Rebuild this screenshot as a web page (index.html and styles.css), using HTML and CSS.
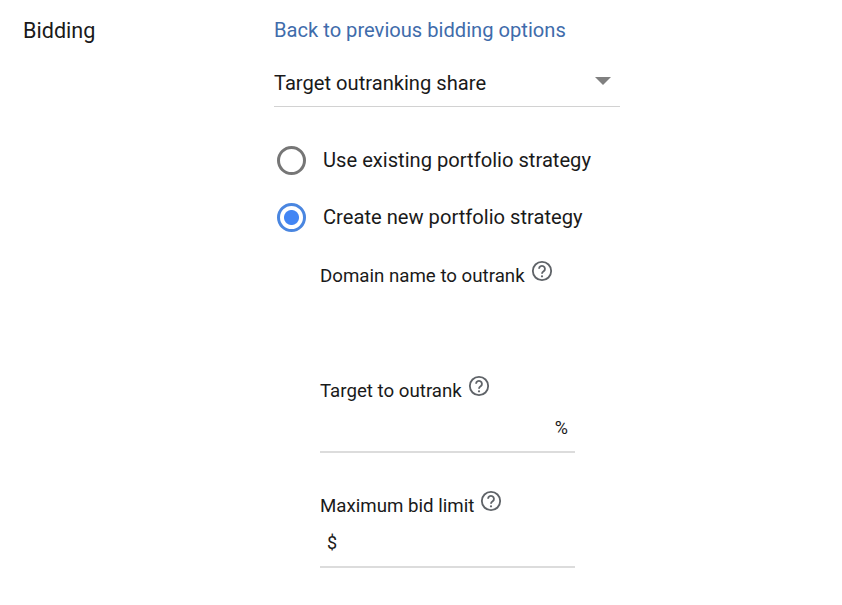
FILE: index.html
```html
<!DOCTYPE html>
<html>
<head>
  <title>Bidding</title>
  <link rel="stylesheet" href="styles.css">
</head>
<body>
  <div class="container">
    <div class="section-label">Bidding</div>
    <div class="section-body">
      <a class="back-link">Back to previous bidding options</a>
      <div class="select-box">
        <span>Target outranking share</span>
        <span class="select-arrow"></span>
      </div>
      <div class="radio-row first">
        <span class="radio"></span>
        <span>Use existing portfolio strategy</span>
      </div>
      <div class="radio-row second">
        <span class="radio checked"></span>
        <span>Create new portfolio strategy</span>
      </div>
      <div class="fields">
        <div class="field field-domain">
          <div class="field-label">
            <span>Domain name to outrank</span>
            <svg class="help" viewBox="0 0 24 24"><circle cx="12" cy="12" r="10" fill="none" stroke="#5f6368" stroke-width="2"/><path d="M8.8 9.6a3.2 3.2 0 1 1 5 2.7c-1.2.8-1.8 1.4-1.8 2.7" fill="none" stroke="#5f6368" stroke-width="2"/><circle cx="12" cy="17.8" r="1.2" fill="#5f6368"/></svg>
          </div>
        </div>
        <div class="field field-target">
          <div class="field-label">
            <span>Target to outrank</span>
            <svg class="help" viewBox="0 0 24 24"><circle cx="12" cy="12" r="10" fill="none" stroke="#5f6368" stroke-width="2"/><path d="M8.8 9.6a3.2 3.2 0 1 1 5 2.7c-1.2.8-1.8 1.4-1.8 2.7" fill="none" stroke="#5f6368" stroke-width="2"/><circle cx="12" cy="17.8" r="1.2" fill="#5f6368"/></svg>
          </div>
          <div class="input-line percent"><span>%</span></div>
        </div>
        <div class="field field-bid">
          <div class="field-label">
            <span>Maximum bid limit</span>
            <svg class="help" viewBox="0 0 24 24"><circle cx="12" cy="12" r="10" fill="none" stroke="#5f6368" stroke-width="2"/><path d="M8.8 9.6a3.2 3.2 0 1 1 5 2.7c-1.2.8-1.8 1.4-1.8 2.7" fill="none" stroke="#5f6368" stroke-width="2"/><circle cx="12" cy="17.8" r="1.2" fill="#5f6368"/></svg>
          </div>
          <div class="input-line dollar"><span>$</span></div>
        </div>
      </div>
    </div>
  </div>
</body>
</html>
```

FILE: styles.css
```css
body {
  margin: 0;
  background-color: #ffffff;
  color: #1a1a1a;
  font-family: Roboto, "Liberation Sans", sans-serif;
}
.container {
  display: flex;
  padding-top: 18px;
  padding-left: 23px;
}
.section-label {
  width: 251px;
  font-size: 21.6px;
  line-height: 26px;
}
.section-body {
  width: 346px;
}
.back-link {
  display: block;
  color: #3f6cab;
  font-size: 20.15px;
  line-height: 24px;
}
.select-box {
  display: flex;
  justify-content: space-between;
  height: 35px;
  margin-top: 29px;
  border-bottom: 1px solid #d2d2d2;
  font-size: 20.15px;
  line-height: 24px;
}
.select-arrow {
  width: 0;
  height: 0;
  margin: 6px 9px 0 0;
  border-left: 8px solid transparent;
  border-right: 8px solid transparent;
  border-top: 8px solid #808080;
}
.radio-row {
  display: flex;
  align-items: center;
  gap: 17px;
  padding-left: 3px;
  font-size: 20.15px;
  line-height: 30px;
}
.radio-row.first {
  margin-top: 38px;
}
.radio-row.second {
  margin-top: 27px;
}
.radio {
  box-sizing: border-box;
  width: 29px;
  height: 29px;
  border: 3px solid #767676;
  border-radius: 50%;
}
.radio.checked {
  border-color: #4a86e0;
  background: radial-gradient(circle, #4285f4 0 7px, #ffffff 8px);
}
.fields {
  width: 255px;
  margin-left: 46px;
}
.field-label {
  display: flex;
  align-items: flex-start;
  gap: 6px;
  font-size: 18.7px;
  line-height: 24px;
}
.help {
  width: 22px;
  height: 22px;
  margin-top: -4px;
}
.field-domain {
  height: 115px;
  margin-top: 32px;
}
.input-line {
  display: flex;
  height: 38px;
  margin-top: 10px;
  border-bottom: 2px solid #dcdcdc;
  font-size: 18px;
  line-height: 30px;
}
.percent {
  justify-content: flex-end;
  padding-right: 7px;
}
.dollar {
  padding-left: 7px;
}
.field-target {
  height: 115px;
}
```
